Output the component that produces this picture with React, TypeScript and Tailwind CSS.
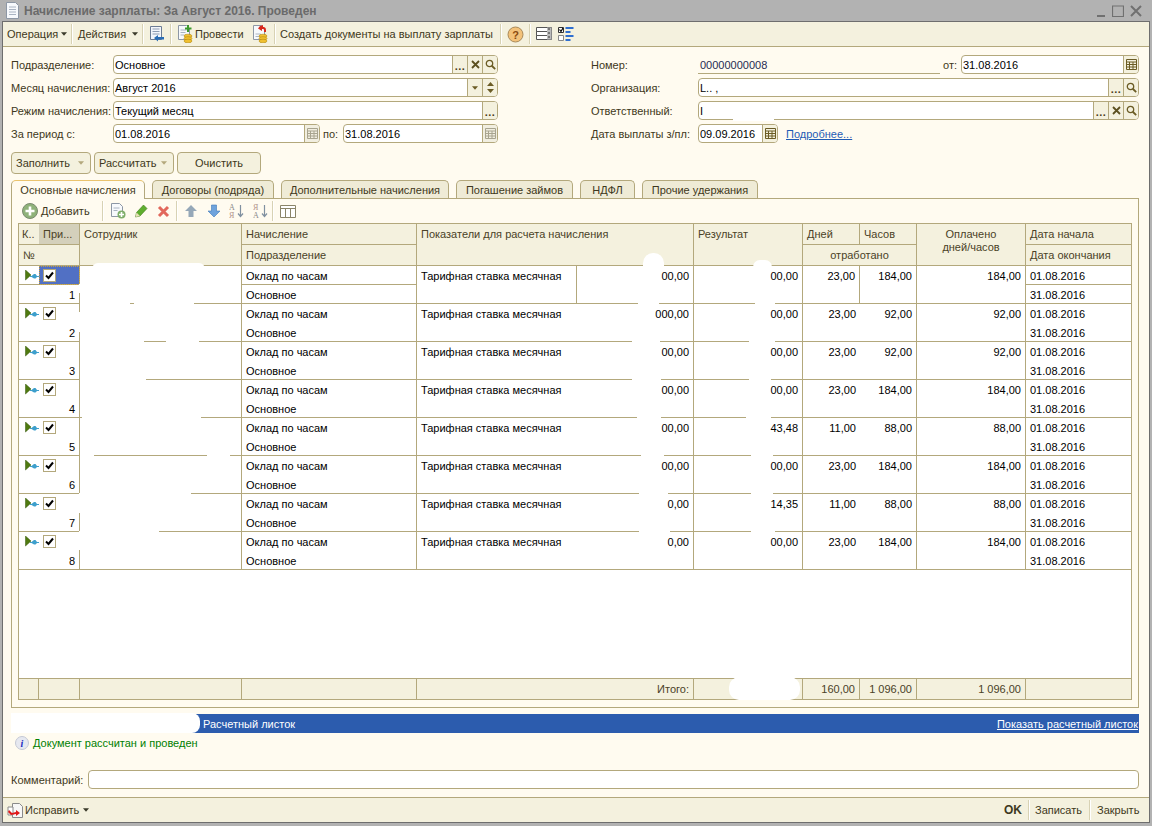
import React from "react";

const FONT = "font-['Liberation_Sans',Arial,sans-serif]";
const LINE = "border-[#b3a87c]";

const DocIcon = () => (
  <svg width="15" height="17" viewBox="0 0 15 17">
    <path d="M1.500.500h9l3 3v13h-12z" fill="#f7f9fc" stroke="#8d97a5" />
    <path d="M4 5h7M4 7.500h7M4 10h7M4 12.500h7" stroke="#aab4c2" />
  </svg>
);

const TreeArrow = () => (
  <svg width="14" height="11" viewBox="0 0 14 11" className="shrink-0">
    <path d="M.5 0l5.500 5-5.500 5z" fill="#4f7a10" stroke="#35560a" strokeWidth=".5" />
    <path d="M5 6h1.500l2.500-2h1.500l1.500 2h2v1h-2l-1.500 1.500H9L6.500 7H5z" fill="#3d9fcc" />
  </svg>
);

const CheckBox = () => (
  <span className={`flex h-[13px] w-[13px] items-center justify-center border ${LINE} bg-white`}>
    <svg width="9" height="9" viewBox="0 0 9 9">
      <path d="M1 4.500l2.500 2.500L8 1.500" fill="none" stroke="#000" strokeWidth="2" />
    </svg>
  </span>
);

const Caret = ({ color = "#3a3a2a" }: { color?: string }) => (
  <svg width="6" height="4" viewBox="0 0 7 4" className="shrink-0">
    <path d="M0 0h7L3.500 4z" fill={color} />
  </svg>
);

const ToolSep = ({ ml, mr }: { ml: string; mr: string }) => (
  <span className={`h-[20px] w-[2px] shrink-0 border-l border-[#d8d2b4] bg-white ${ml} ${mr}`} />
);

const SearchGlyph = () => (
  <svg width="11" height="11" viewBox="0 0 11 11">
    <circle cx="4.500" cy="4.500" r="3.200" fill="none" stroke="#6b5c25" strokeWidth="1.300" />
    <path d="M7 7l3.200 3.200" stroke="#6b5c25" strokeWidth="1.800" />
  </svg>
);

const CrossGlyph = () => (
  <svg width="9" height="9" viewBox="0 0 9 9">
    <path d="M1 1l7 7M8 1L1 8" stroke="#5c5020" strokeWidth="1.800" />
  </svg>
);

const DotsGlyph = () => (
  <span className="mt-[3px] text-[11px] font-bold leading-none tracking-[0.5px] text-[#4a4020]">...</span>
);

const CalendarGlyph = ({ pale }: { pale?: boolean }) => (
  <svg width="11" height="11" viewBox="0 0 11 11">
    <path
      d="M.5.500h10v10H.5zM.5 3h10M.5 5.500h10M.5 8h10M3.500 3v7.500M7 3v7.500"
      fill="none"
      stroke={pale ? "#a8a48f" : "#6b5c25"}
    />
  </svg>
);

const SpinGlyph = () => (
  <svg width="9" height="13" viewBox="0 0 9 13">
    <path d="M4.500 1L8 5H1zM4.500 12L1 8h7z" fill="#6b5c25" />
  </svg>
);

const FieldBtn = ({ children, pale }: { children: React.ReactNode; pale?: boolean }) => (
  <span
    className={`flex h-full w-[15px] shrink-0 items-center justify-center border-l ${LINE} ${
      pale ? "bg-[#f1eee0]" : "bg-[#f4f1de]"
    }`}
  >
    {children}
  </span>
);

const Field = ({
  value,
  className,
  children,
}: {
  value?: React.ReactNode;
  className?: string;
  children?: React.ReactNode;
}) => (
  <div className={`flex h-[19px] overflow-hidden rounded-[4px] border ${LINE} bg-white ${className ?? ""}`}>
    <span className="flex-1 truncate pl-[1px] leading-[18px] text-black">{value}</span>
    {children}
  </div>
);

const Row = ({ label, width, children }: { label: string; width: string; children: React.ReactNode }) => (
  <div className="flex h-[19px] items-center">
    <span className={`shrink-0 whitespace-nowrap text-[#3e3820] ${width}`}>{label}</span>
    {children}
  </div>
);

const FormButton = ({ label, width, arrow }: { label: string; width: string; arrow?: boolean }) => (
  <div
    className={`flex h-[22px] items-center rounded-[4px] border ${LINE} bg-[#f4f1de] text-[#3e3820] ${width} ${
      arrow ? "justify-between pl-[4px] pr-[6px]" : "justify-center"
    }`}
  >
    <span>{label}</span>
    {arrow && <Caret color="#b3a87c" />}
  </div>
);

const TABS = [
  { label: "Основные начисления", width: "w-[134px]", active: true },
  { label: "Договоры (подряда)", width: "w-[122px]" },
  { label: "Дополнительные начисления", width: "w-[168px]" },
  { label: "Погашение займов", width: "w-[117px]" },
  { label: "НДФЛ", width: "w-[55px]" },
  { label: "Прочие удержания", width: "w-[116px]" },
];

const COLS = "grid-cols-[20px_41px_162px_175px_277px_109px_57px_57px_109px_106px]";

const H = ({ className, children }: { className?: string; children?: React.ReactNode }) => (
  <div className={`${LINE} truncate border-b border-r bg-[#f4f1de] px-[4px] pt-[3px] text-[#4a4227] ${className ?? ""}`}>
    {children}
  </div>
);

const C = ({ className, children }: { className?: string; children?: React.ReactNode }) => (
  <div className={`${LINE} truncate px-[4px] leading-[20px] text-black ${className ?? ""}`}>{children}</div>
);

const ROWS = [
  { rate: "00,00", result: "00,00", days: "23,00", hours: "184,00", paid: "184,00" },
  { rate: "000,00", result: "00,00", days: "23,00", hours: "92,00", paid: "92,00" },
  { rate: "00,00", result: "00,00", days: "23,00", hours: "92,00", paid: "92,00" },
  { rate: "00,00", result: "00,00", days: "23,00", hours: "184,00", paid: "184,00" },
  { rate: "00,00", result: "43,48", days: "11,00", hours: "88,00", paid: "88,00" },
  { rate: "00,00", result: "00,00", days: "23,00", hours: "184,00", paid: "184,00" },
  { rate: "0,00", result: "14,35", days: "11,00", hours: "88,00", paid: "88,00" },
  { rate: "0,00", result: "00,00", days: "23,00", hours: "184,00", paid: "184,00" },
];

// white smears that hide names and amounts in the original picture
const SMEARS = [
  "left-[92px] top-[263px] h-[40px] w-[113px] rounded-t-[6px]",
  "left-[80px] top-[284px] h-[19px] w-[161px]",
  "left-[79px] top-[284px] h-[9px] w-[2px]",
  "left-[80px] top-[303px] h-[1px] w-[50px]",
  "left-[134px] top-[303px] h-[1px] w-[60px]",
  "left-[79px] top-[312px] h-[20px] w-[2px]",
  "left-[80px] top-[341px] h-[1px] w-[64px]",
  "left-[166px] top-[341px] h-[1px] w-[33px]",
  "left-[80px] top-[379px] h-[1px] w-[66px]",
  "left-[82px] top-[417px] h-[1px] w-[119px]",
  "left-[80px] top-[455px] h-[1px] w-[14px]",
  "left-[207px] top-[455px] h-[1px] w-[23px]",
  "left-[80px] top-[493px] h-[1px] w-[111px]",
  "left-[79px] top-[493px] h-[20px] w-[2px]",
  "left-[80px] top-[531px] h-[1px] w-[79px]",
  "left-[79px] top-[531px] h-[19px] w-[2px]",
  "left-[643px] top-[253px] h-[14px] w-[21px] rounded-t-[10px]",
  "left-[638px] top-[303px] h-[1px] w-[21px]",
  "left-[632px] top-[341px] h-[1px] w-[28px]",
  "left-[632px] top-[379px] h-[1px] w-[29px]",
  "left-[637px] top-[417px] h-[1px] w-[24px]",
  "left-[641px] top-[455px] h-[1px] w-[23px]",
  "left-[639px] top-[493px] h-[1px] w-[29px]",
  "left-[639px] top-[531px] h-[1px] w-[31px]",
  "left-[753px] top-[260px] h-[7px] w-[19px] rounded-t-[10px]",
  "left-[755px] top-[303px] h-[1px] w-[20px]",
  "left-[749px] top-[341px] h-[1px] w-[26px]",
  "left-[749px] top-[379px] h-[1px] w-[22px]",
  "left-[746px] top-[417px] h-[1px] w-[25px]",
  "left-[751px] top-[455px] h-[1px] w-[22px]",
  "left-[751px] top-[493px] h-[1px] w-[22px]",
  "left-[751px] top-[531px] h-[1px] w-[24px]",
  "left-[729px] top-[677px] h-[23px] w-[71px] rounded-[10px]",
  "left-[11px] top-[713px] h-[20px] w-[189px] rounded-r-[8px]",
  "left-[733px] top-[118px] h-[3px] w-[41px]",
];

export default function App() {
  return (
    <div className={`relative flex h-[826px] w-[1152px] flex-col overflow-hidden bg-[#b2b2b2] px-[2px] pb-[3px] text-[11px] leading-[14px] ${FONT}`}>
      {/* title bar */}
      <div className="flex h-[21px] shrink-0 items-center pl-[3px] pr-[8px]">
        <DocIcon />
        <span className="ml-[4px] whitespace-nowrap text-[12px] font-bold text-[#6a6a6a]">Начисление зарплаты: За Август 2016. Проведен</span>
        <div className="ml-auto flex items-center gap-[6px]">
          <svg width="10" height="12" viewBox="0 0 10 12"><path d="M1 10h8v2H1z" fill="#707070" /></svg>
          <svg width="12" height="12" viewBox="0 0 12 12"><path d="M.5 1h11v10.500H.5z" fill="none" stroke="#707070" strokeWidth="1.200" /></svg>
          <svg width="12" height="12" viewBox="0 0 12 12"><path d="M1 1l10 10M11 1L1 11" stroke="#707070" strokeWidth="2" /></svg>
        </div>
      </div>

      {/* window */}
      <div className="flex min-h-0 flex-1 flex-col border border-[#6e6e6e] bg-[#fffbf0]">
        <div className={`flex h-[25px] shrink-0 items-center border-b ${LINE} bg-[#f4f1de] pl-[4px] text-[#3e3820]`}>
          <span className="w-[53px]">Операция</span>
          <span className="ml-[1px]"><Caret /></span>
          <ToolSep ml="ml-[4px]" mr="mr-[5px]" />
          <span className="w-[49px]">Действия</span>
          <span className="ml-[5px]"><Caret /></span>
          <ToolSep ml="ml-[4px]" mr="mr-[5px]" />
          <svg width="16" height="17" viewBox="0 0 16 17" className="shrink-0">
            <path d="M1.500.500h11v13h-11z" fill="#f3f6fb" stroke="#6c7c94" />
            <path d="M3.500 3h7M3.500 5.500h7M3.500 8h7" stroke="#8f9db3" />
            <path d="M5 12l4-3v2h6v2.500H9V15.500z" fill="#2a6db5" />
          </svg>
          <ToolSep ml="ml-[5px]" mr="mr-[5px]" />
          <svg width="16" height="18" viewBox="0 0 16 18" className="shrink-0">
            <path d="M1.500.500h8l3 3v11h-11z" fill="#f7f9fc" stroke="#8d97a5" />
            <path d="M3.500 5h6M3.500 7.500h5M3.500 10h4" stroke="#aab4c2" />
            <path d="M10 0h2v2.500h2.500v2H12V7h-2V4.500H8v-2h2z" fill="#3c9a2c" />
            <ellipse cx="11" cy="11" rx="4" ry="1.800" fill="#f0c030" stroke="#b68a10" strokeWidth=".6" />
            <ellipse cx="11" cy="13.500" rx="4" ry="1.800" fill="#f0c030" stroke="#b68a10" strokeWidth=".6" />
            <ellipse cx="11" cy="16" rx="4" ry="1.800" fill="#f0c030" stroke="#b68a10" strokeWidth=".6" />
          </svg>
          <span className="ml-[2px] w-[48px]">Провести</span>
          <svg width="16" height="18" viewBox="0 0 16 18" className="ml-[9px] shrink-0">
            <path d="M1.500.500h8l3 3v11h-11z" fill="#f7f9fc" stroke="#8d97a5" />
            <path d="M3.500 9h5M3.500 11.500h4" stroke="#aab4c2" />
            <path d="M8 1l3-1v2h1a3 3 0 0 1 2 3v2h-2V5q0-1-1-1h-1v2L6 3.500z" fill="#d8281c" />
            <ellipse cx="11" cy="11" rx="4" ry="1.800" fill="#f0c030" stroke="#b68a10" strokeWidth=".6" />
            <ellipse cx="11" cy="13.500" rx="4" ry="1.800" fill="#f0c030" stroke="#b68a10" strokeWidth=".6" />
            <ellipse cx="11" cy="16" rx="4" ry="1.800" fill="#f0c030" stroke="#b68a10" strokeWidth=".6" />
          </svg>
          <ToolSep ml="ml-[6px]" mr="mr-[4px]" />
          <span className="w-[214px] whitespace-nowrap">Создать документы на выплату зарплаты</span>
          <ToolSep ml="ml-[6px]" mr="mr-[5px]" />
          <svg width="17" height="17" viewBox="0 0 17 17" className="shrink-0">
            <circle cx="8.500" cy="8.500" r="7.500" fill="#f3c27a" stroke="#a98a5a" />
            <text x="8.500" y="12.500" textAnchor="middle" fontSize="11" fontWeight="700" fill="#8a4a10">?</text>
          </svg>
          <ToolSep ml="ml-[5px]" mr="mr-[5px]" />
          <svg width="16" height="16" viewBox="0 0 16 16" className="shrink-0">
            <path d="M.5 1.500h15v4H.5zM.5 5.500h15v4H.5zM.5 9.500h15v4H.5z" fill="#fff" stroke="#555" />
            <path d="M11 1.500h4.500v12H11z" fill="#bbb" />
            <path d="M12 3h2M12 7h2M12 11h2" stroke="#333" />
          </svg>
          <svg width="16" height="16" viewBox="0 0 16 16" className="ml-[6px] shrink-0">
            <path d="M.5 1.500h5v5h-5z" fill="#fff" stroke="#333" />
            <path d="M1.500 3.500l1.500 2 2-3.500" fill="none" stroke="#000" strokeWidth="1.200" />
            <path d="M.5 9.500h5v5h-5z" fill="#fff" stroke="#888" />
            <path d="M7.500 1h8v2h-8zM7.500 5h5v2h-5zM7.500 9h8v2h-8zM7.500 13h5v2h-5z" fill="#2f6fd0" />
          </svg>
        </div>

        {/* header form */}
        <div className="flex shrink-0 gap-[93px] pl-[8px] pt-[8px]">
          <div className="flex w-[487px] flex-col gap-[4px]">
            <Row label="Подразделение:" width="w-[102px]">
              <Field value="Основное" className="flex-1">
                <FieldBtn><DotsGlyph /></FieldBtn>
                <FieldBtn><CrossGlyph /></FieldBtn>
                <FieldBtn><SearchGlyph /></FieldBtn>
              </Field>
            </Row>
            <Row label="Месяц начисления:" width="w-[102px]">
              <Field value="Август 2016" className="flex-1">
                <FieldBtn><Caret color="#6b5c25" /></FieldBtn>
                <FieldBtn><SpinGlyph /></FieldBtn>
              </Field>
            </Row>
            <Row label="Режим начисления:" width="w-[102px]">
              <Field value="Текущий месяц" className="flex-1">
                <FieldBtn><DotsGlyph /></FieldBtn>
              </Field>
            </Row>
            <Row label="За период с:" width="w-[102px]">
              <Field value="01.08.2016" className="w-[207px]">
                <FieldBtn pale><CalendarGlyph pale /></FieldBtn>
              </Field>
              <span className="ml-[3px] w-[20px] text-[#3e3820]">по:</span>
              <Field value="31.08.2016" className="flex-1">
                <FieldBtn pale><CalendarGlyph pale /></FieldBtn>
              </Field>
            </Row>
          </div>

          <div className="flex w-[548px] flex-col gap-[4px]">
            <Row label="Номер:" width="w-[107px]">
              <div className={`h-[19px] w-[242px] border-b ${LINE} pl-[2px] pt-[3px] text-[#1f2b52]`}>00000000008</div>
              <span className="ml-[3px] w-[18px] text-[#3e3820]">от:</span>
              <Field value="31.08.2016" className="flex-1">
                <FieldBtn><CalendarGlyph /></FieldBtn>
              </Field>
            </Row>
            <Row label="Организация:" width="w-[107px]">
              <Field value="L.. ," className="flex-1">
                <FieldBtn><DotsGlyph /></FieldBtn>
                <FieldBtn><SearchGlyph /></FieldBtn>
              </Field>
            </Row>
            <Row label="Ответственный:" width="w-[107px]">
              <Field value="I" className="flex-1">
                <FieldBtn><DotsGlyph /></FieldBtn>
                <FieldBtn><CrossGlyph /></FieldBtn>
                <FieldBtn><SearchGlyph /></FieldBtn>
              </Field>
            </Row>
            <Row label="Дата выплаты з/пл:" width="w-[107px]">
              <Field value="09.09.2016" className="w-[80px]">
                <FieldBtn><CalendarGlyph /></FieldBtn>
              </Field>
              <span className="ml-[8px] text-[#1f5bb5] underline">Подробнее...</span>
            </Row>
          </div>
        </div>

        <div className="mt-[9px] flex shrink-0 gap-[3px] pl-[8px]">
          <FormButton label="Заполнить" width="w-[80px]" arrow />
          <FormButton label="Рассчитать" width="w-[80px]" arrow />
          <FormButton label="Очистить" width="w-[84px]" />
        </div>

        {/* tabs */}
        <div className="mt-[6px] flex h-[18px] shrink-0 gap-[7px] pl-[8px]">
          {TABS.map((tab) => (
            <div
              key={tab.label}
              className={`z-10 flex items-center justify-center whitespace-nowrap rounded-t-[5px] border border-b-0 ${tab.width} ${
                tab.active
                  ? "h-[19px] border-[#b3a87c] border-t-[#eac36e] bg-[#fffbf0] text-[#3e3820]"
                  : "h-[18px] border-[#b3a87c] bg-[#efebd6] text-[#3e3820]"
              }`}
            >
              {tab.label}
            </div>
          ))}
        </div>

        <div className={`ml-[8px] mr-[10px] flex h-[510px] shrink-0 flex-col border ${LINE} px-[6px]`}>
          {/* table toolbar */}
          <div className="flex h-[24px] shrink-0 items-center pl-[4px] text-[#3e3820]">
            <svg width="16" height="16" viewBox="0 0 16 16" className="shrink-0">
              <circle cx="8" cy="8" r="7.500" fill="#8fb27a" stroke="#7a8a70" />
              <path d="M6.700 3.500h2.600v3.200h3.200v2.600H9.300v3.200H6.700V9.300H3.500V6.700h3.200z" fill="#fff" />
            </svg>
            <span className="ml-[3px] w-[60px]"><span className="underline">Д</span>обавить</span>
            <ToolSep ml="ml-[1px]" mr="mr-[6px]" />
            <svg width="16" height="16" viewBox="0 0 16 16" className="shrink-0">
              <path d="M1.500.500h8l3 3v10h-11z" fill="#f7f9fc" stroke="#8d97a5" />
              <path d="M3.500 5h6M3.500 7.500h4" stroke="#aab4c2" />
              <circle cx="11.500" cy="11.500" r="4" fill="#7fae6a" />
              <path d="M10.700 9h1.600v1.700H14v1.600h-1.700V14h-1.600v-1.700H9v-1.600h1.700z" fill="#fff" />
            </svg>
            <svg width="14" height="14" viewBox="0 0 14 14" className="ml-[8px] shrink-0">
              <path d="M9.500 1l3.500 3.500L6 12l-4.500 1L2.500 8.500z" fill="#5fae2e" stroke="#3e7a18" strokeWidth=".6" />
              <path d="M2.500 8.500L6 12l-4.500 1z" fill="#e8e0b8" />
            </svg>
            <svg width="13" height="13" viewBox="0 0 13 13" className="ml-[9px] shrink-0">
              <path d="M2 2l9 9M11 2l-9 9" stroke="#e2685c" strokeWidth="3" />
            </svg>
            <ToolSep ml="ml-[6px]" mr="mr-[6px]" />
            <svg width="14" height="14" viewBox="0 0 14 14" className="shrink-0">
              <path d="M7 1l6 6H9.500v6h-5V7H1z" fill="#96a8b8" />
            </svg>
            <svg width="14" height="14" viewBox="0 0 14 14" className="ml-[9px] shrink-0">
              <path d="M7 13L1 7h3.500V1h5v6H13z" fill="#6fa3dc" stroke="#3f78b8" strokeWidth=".6" />
            </svg>
            <svg width="15" height="16" viewBox="0 0 15 16" className="ml-[8px] shrink-0">
              <text x="0" y="7" fontSize="8" fontFamily="Liberation Serif" fill="#8a8a8a">А</text>
              <text x="0" y="15" fontSize="8" fontFamily="Liberation Serif" fill="#b0908a">Я</text>
              <path d="M11.500 2v11M9 10.500l2.500 3 2.500-3" fill="none" stroke="#8090a0" strokeWidth="1.200" />
            </svg>
            <svg width="15" height="16" viewBox="0 0 15 16" className="ml-[9px] shrink-0">
              <text x="0" y="7" fontSize="8" fontFamily="Liberation Serif" fill="#b0908a">Я</text>
              <text x="0" y="15" fontSize="8" fontFamily="Liberation Serif" fill="#8a8a8a">А</text>
              <path d="M11.500 2v11M9 10.500l2.500 3 2.500-3" fill="none" stroke="#8090a0" strokeWidth="1.200" />
            </svg>
            <ToolSep ml="ml-[4px]" mr="mr-[6px]" />
            <svg width="16" height="13" viewBox="0 0 16 13" className="shrink-0">
              <path d="M.5.500h15v12H.5zM.5 3.500h15M5.500 3.500v9M10.500 3.500v9" fill="#fff" stroke="#8a8468" />
            </svg>
          </div>

          {/* table */}
          <div className={`flex h-[477px] w-[1114px] shrink-0 flex-col border-l border-t ${LINE} bg-white`}>
            <div className={`grid shrink-0 grid-rows-[21px_21px] ${COLS}`}>
              <H className="border-r-0 !px-[3px]">К..</H>
              <H className="!bg-[#d4d0bb]">При...</H>
              <H className="row-span-2">Сотрудник</H>
              <H>Начисление</H>
              <H className="row-span-2">Показатели для расчета начисления</H>
              <H className="row-span-2">Результат</H>
              <H>Дней</H>
              <H>Часов</H>
              <H className="row-span-2 whitespace-normal !pt-[4px] text-center leading-[13px]">Оплачено<br />дней/часов</H>
              <H>Дата начала</H>
              <H className="col-span-2">№</H>
              <H>Подразделение</H>
              <H className="col-span-2 text-center">отработано</H>
              <H>Дата окончания</H>
            </div>

            {ROWS.map((row, i) => {
              const first = i === 0;
              return (
                <div key={i} className={`grid shrink-0 grid-rows-[19px_19px] ${COLS}`}>
                  <div className={`flex items-center pl-[6px] ${first ? `border-b ${LINE}` : ""}`}>
                    <TreeArrow />
                  </div>
                  <div className={`flex items-center border-r ${LINE} ${first ? "border-b bg-[#5170c4] pl-[4px] outline-1 -outline-offset-1 outline-dotted outline-[#c9a13f]" : "pl-[4px]"}`}>
                    <CheckBox />
                  </div>
                  <C className="row-span-2 border-b border-r" />
                  <C className={first ? "border-b border-r" : "border-r"}>Оклад по часам</C>
                  <C className="row-span-2 flex border-b border-r !px-0">
                    <span className={`w-[160px] shrink-0 px-[4px] ${first ? `border-r ${LINE}` : ""}`}>Тарифная ставка месячная</span>
                    <span className="flex-1 pr-[4px] text-right">{row.rate}</span>
                  </C>
                  <C className="row-span-2 border-b border-r text-right">{row.result}</C>
                  <C className={`row-span-2 border-b text-right ${first ? "border-r" : ""}`}>{row.days}</C>
                  <C className="row-span-2 border-b border-r text-right">{row.hours}</C>
                  <C className="row-span-2 border-b border-r text-right">{row.paid}</C>
                  <C className={first ? "border-b border-r" : "border-r"}>01.08.2016</C>
                  <C className={`col-span-2 border-b border-r text-right ${first ? "text-[#5a1e5a]" : "text-[#1f2b52]"}`}>{i + 1}</C>
                  <C className="border-b border-r">Основное</C>
                  <C className="border-b border-r">31.08.2016</C>
                </div>
              );
            })}

            <div className={`min-h-0 flex-1 border-r ${LINE}`} />

            <div className={`grid h-[22px] shrink-0 border-b border-t ${LINE} ${COLS} bg-[#f4f1de] text-[#4a4227]`}>
              {["", "", "", "", "Итого:", "", "160,00", "1 096,00", "1 096,00", ""].map((cell, i) => (
                <div key={i} className={`border-r ${LINE} px-[4px] text-right leading-[20px]`}>{cell}</div>
              ))}
            </div>
          </div>
        </div>

        <div className="ml-[8px] mr-[10px] mt-[6px] flex h-[19px] shrink-0 items-center justify-between bg-[#2c5cae] pl-[192px] pr-[1px] text-white">
          <span>Расчетный листок</span>
          <span className="underline">Показать расчетный листок</span>
        </div>

        <div className="mt-[3px] flex h-[14px] shrink-0 items-center pl-[12px]">
          <svg width="14" height="14" viewBox="0 0 14 14" className="shrink-0">
            <circle cx="7" cy="7" r="6.500" fill="#e6e8f0" stroke="#c4c8d4" />
            <text x="7" y="11" textAnchor="middle" fontSize="10" fontWeight="700" fontStyle="italic" fontFamily="Liberation Serif" fill="#1c2cc0">i</text>
          </svg>
          <span className="ml-[4px] text-[#008000]">Документ рассчитан и проведен</span>
        </div>

        <div className="mt-[20px] flex h-[19px] shrink-0 items-center pl-[8px] pr-[10px]">
          <span className="w-[77px] shrink-0 text-[#3e3820]">Комментарий:</span>
          <Field className="flex-1" />
        </div>

        <div className={`mt-[8px] flex h-[25px] shrink-0 items-center border-t ${LINE} bg-[#f4f1de] pl-[4px] pr-[8px] text-[#3e3820]`}>
          <svg width="17" height="17" viewBox="0 0 17 17" className="shrink-0">
            <path d="M5.500 1.500h7l3 3v11h-10z" fill="#f7f7f7" stroke="#8a8a8a" />
            <path d="M1 5h5v8H1z" fill="#fff" stroke="#8a8a8a" />
            <path d="M2 8l3 3 4-1v-2l4 3-4 3v-2l-5 1-3-3z" fill="#e01818" />
          </svg>
          <span className="ml-[1px]">Исправить</span>
          <span className="ml-[4px]"><Caret /></span>
          <span className="ml-auto text-[12px] font-bold text-[#3e3820]">OK</span>
          <ToolSep ml="ml-[6px]" mr="mr-[5px]" />
          <span className="w-[47px]">Записать</span>
          <ToolSep ml="ml-[7px]" mr="mr-[6px]" />
          <span className="w-[44px] whitespace-nowrap">Закрыть</span>
        </div>
      </div>

      {SMEARS.map((smear) => (
        <div key={smear} className={`absolute z-20 bg-white ${smear}`} />
      ))}
    </div>
  );
}
